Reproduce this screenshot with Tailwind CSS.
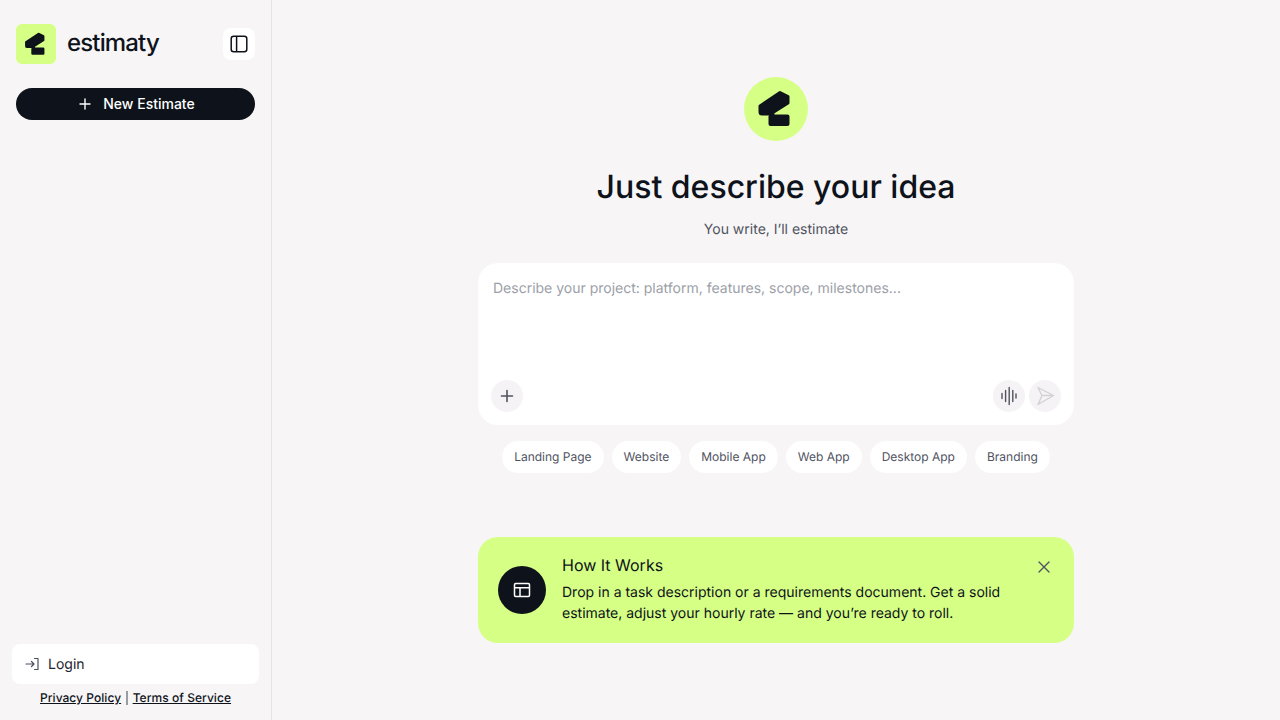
<!DOCTYPE html>
<html>
<head>
<meta charset="utf-8">
<script src="https://cdn.jsdelivr.net/npm/@tailwindcss/browser@4"></script>
</head>
<body class="bg-[#f7f5f6] font-['Inter',sans-serif] text-[#0e131b] antialiased [text-rendering:geometricPrecision]">
<div class="flex h-[720px] w-[1280px] overflow-hidden">
  <aside class="flex h-full w-[272px] flex-col border-r border-[#e5e3e6]">
    <div class="flex items-center justify-between pt-6 pl-4 pr-4">
      <div class="flex items-center gap-[11px]">
        <div class="flex h-10 w-10 items-center justify-center rounded-md bg-[#d6ff85]">
          <svg class="h-10 w-10" viewBox="0 0 64 64"><path d="M16 29 36 15.5 44 19.5V26L29 35.5V37H18Q16 37 16 35Z" fill="#0e131b" stroke="#0e131b" stroke-width="3" stroke-linejoin="round"/><rect x="24.5" y="37.5" width="21" height="11.5" rx="2" fill="#0e131b"/></svg>
        </div>
        <span class="pb-[3px] text-2xl leading-none font-medium tracking-[-0.85px]">estimaty</span>
      </div>
      <button class="flex h-8 w-8 items-center justify-center rounded-lg bg-white">
        <svg class="h-5 w-5" viewBox="0 0 20 20" fill="none" stroke="#0e131b" stroke-width="1.5"><rect x="2.2" y="2.2" width="15.6" height="15.6" rx="2.5"/><path d="M7.6 2.2V17.8"/></svg>
      </button>
    </div>
    <div class="mt-6 px-4">
      <button class="flex h-8 w-full items-center justify-center gap-[10px] rounded-full bg-[#0e131b] pl-[1px] text-sm font-medium text-white">
        <svg class="h-4 w-4" viewBox="0 0 16 16" fill="none" stroke="#fff" stroke-width="1.4" stroke-linecap="round"><path d="M8 3V13M3 8H13"/></svg>
        New Estimate
      </button>
    </div>
    <div class="flex-1"></div>
    <div class="px-3 pb-[14px]">
      <div class="flex h-10 items-center gap-2 rounded-lg bg-white px-3 text-sm text-[#1f2430]">
        <svg class="h-4 w-4" viewBox="0 0 16 16" fill="none" stroke="#4b5060" stroke-width="1.2" stroke-linecap="round" stroke-linejoin="round"><path d="M10.5 2.5H14V13.5H10.5M2 8H10M7.5 5.5 10 8 7.5 10.5"/></svg>
        <span class="pt-[1px]">Login</span>
      </div>
      <div class="mt-[6px] flex items-center justify-center gap-[5px] text-xs leading-4 font-medium tracking-[0.05px]">
        <a class="underline">Privacy Policy</a>
        <span class="h-[14px] w-[1.5px] bg-[#9a9ca3]"></span>
        <a class="underline">Terms of Service</a>
      </div>
    </div>
  </aside>
  <main class="flex flex-1 flex-col items-center pt-[77px]">
    <div class="flex h-16 w-16 items-center justify-center rounded-full bg-[#d6ff85]">
      <svg class="h-16 w-16" viewBox="0 0 64 64"><path d="M16 29 36 15.5 44 19.5V26L29 35.5V37H18Q16 37 16 35Z" fill="#0e131b" stroke="#0e131b" stroke-width="3" stroke-linejoin="round"/><rect x="24.5" y="37.5" width="21" height="11.5" rx="2" fill="#0e131b"/></svg>
    </div>
    <h1 class="mt-[26px] text-[32px] leading-10 font-medium">Just describe your idea</h1>
    <p class="mt-[13px] text-sm leading-5 text-[#50535f]">You write, I’ll estimate</p>
    <div class="mt-[23px] flex h-[162px] w-[596px] flex-col justify-between rounded-[20px] bg-white pt-4 pr-[13px] pb-[13px] pl-[13px]">
      <p class="pl-[2px] text-sm leading-5 text-[#9ca0a8]">Describe your project: platform, features, scope, milestones...</p>
      <div class="flex items-center justify-between">
        <button class="flex h-8 w-8 items-center justify-center rounded-full bg-[#f5f3f5]">
          <svg class="h-4 w-4" viewBox="0 0 16 16" fill="none" stroke="#50535f" stroke-width="1.6" stroke-linecap="round"><path d="M8 2.5V13.5M2.5 8H13.5"/></svg>
        </button>
        <div class="flex gap-1">
          <button class="flex h-8 w-8 items-center justify-center rounded-full bg-[#f5f3f5]">
            <svg class="h-5 w-5" viewBox="0 0 20 20" fill="none" stroke="#50535f" stroke-width="1.4" stroke-linecap="round"><path d="M3 7.5V12.5M6.6 4.5V15.5M10.2 1.5V18.5M13.8 4.5V15.5M17 8V12"/></svg>
          </button>
          <button class="flex h-8 w-8 items-center justify-center rounded-full bg-[#f5f3f5]">
            <svg class="h-5 w-5" viewBox="0 0 20 20" fill="none" stroke="#d2d2d6" stroke-width="1.4" stroke-linejoin="round" stroke-linecap="round"><path d="M3 1.5 18.5 9.5 3 18.5 7 9.5ZM7 9.5H18.5"/></svg>
          </button>
        </div>
      </div>
    </div>
    <div class="mt-4 flex gap-2 text-xs leading-4 text-[#50535f]">
      <span class="flex h-8 items-center rounded-full bg-white px-3">Landing Page</span>
      <span class="flex h-8 items-center rounded-full bg-white px-3">Website</span>
      <span class="flex h-8 items-center rounded-full bg-white px-3">Mobile App</span>
      <span class="flex h-8 items-center rounded-full bg-white px-3">Web App</span>
      <span class="flex h-8 items-center rounded-full bg-white px-3">Desktop App</span>
      <span class="flex h-8 items-center rounded-full bg-white px-3">Branding</span>
    </div>
    <div class="relative mt-16 flex h-[106px] w-[596px] items-center gap-4 rounded-[20px] bg-[#d6ff85] pr-5 pl-5">
      <div class="flex h-12 w-12 shrink-0 items-center justify-center rounded-full bg-[#0e131b]">
        <svg class="h-5 w-5" viewBox="0 0 20 20" fill="none" stroke="#fff" stroke-width="1.5"><rect x="2.5" y="3.5" width="15" height="13" rx="1.2"/><path d="M2.5 7.8H17.5M8 7.8V16.5"/></svg>
      </div>
      <div class="pb-[3px]">
        <h2 class="text-base leading-6 font-normal">How It Works</h2>
        <p class="mt-[5px] w-[470px] text-sm leading-[21px]">Drop in a task description or a requirements document. Get a solid estimate, adjust your hourly rate — and you’re ready to roll.</p>
      </div>
      <button class="absolute top-[20px] right-[20px] flex h-5 w-5 items-center justify-center">
        <svg class="h-5 w-5" viewBox="0 0 20 20" fill="none" stroke="#50535f" stroke-width="1.4" stroke-linecap="round"><path d="M5 5 15 15M15 5 5 15"/></svg>
      </button>
    </div>
  </main>
</div>
</body>
</html>
